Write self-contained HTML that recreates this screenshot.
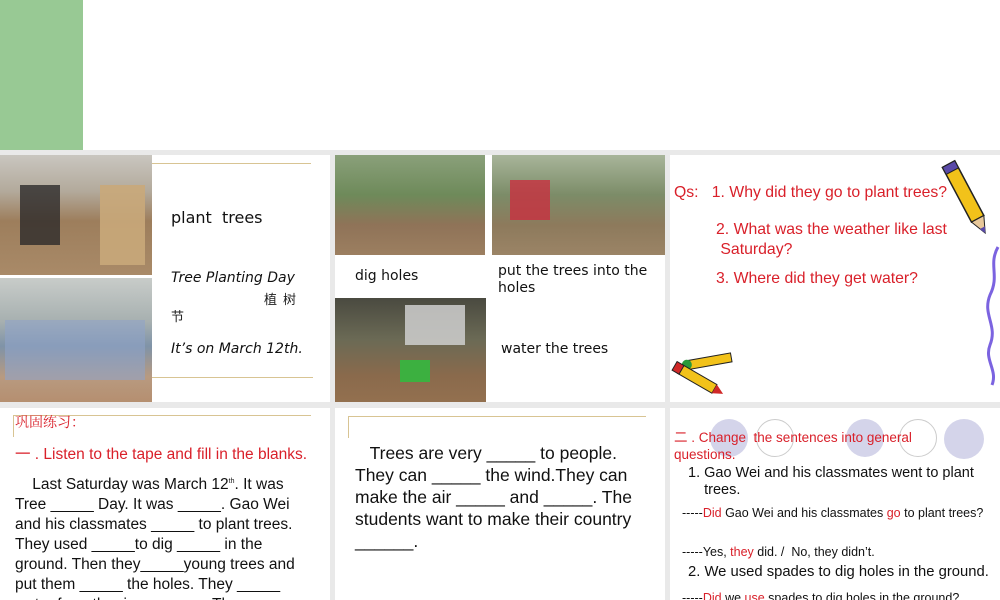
<!DOCTYPE html>
<html><head><meta charset="utf-8">
<style>
*{margin:0;padding:0;box-sizing:border-box}
html,body{width:1000px;height:600px;overflow:hidden}
body{background:#e9e9e9;position:relative;font-family:"Liberation Sans","Noto Sans CJK SC",sans-serif}
.a{position:absolute}
.p{position:absolute;background:#fff}
.ph{position:absolute}
.dv{font-family:"DejaVu Sans","Noto Sans CJK SC",sans-serif}
.r{color:#d9202a}
.t{white-space:nowrap}
</style></head><body>
<div class="a" style="left:0;top:0;width:1000px;height:150px;background:#fff"></div>
<div class="a" style="left:0;top:0;width:83px;height:150px;background:#98c994"></div>

<!-- panel 1 -->
<div class="p" style="left:0;top:155px;width:330px;height:247px"></div>
<div class="ph" style="left:0;top:155px;width:152px;height:120px;background:linear-gradient(#c9c6c0 0%,#b3aa9c 30%,#9d7e5c 55%,#a98a68 100%)"></div>
<div class="ph" style="left:20px;top:185px;width:40px;height:60px;background:#2d2a2a;opacity:.8"></div>
<div class="ph" style="left:100px;top:185px;width:45px;height:80px;background:#c9a97a;opacity:.9"></div>
<div class="ph" style="left:0;top:278px;width:152px;height:124px;background:linear-gradient(#c8ccc9 0%,#a7b0b0 35%,#7f93a8 55%,#b89a80 80%,#b58f70 100%)"></div>
<div class="ph" style="left:5px;top:320px;width:140px;height:60px;background:#8fa4c8;opacity:.6"></div>
<div class="a" style="left:152px;top:163px;width:159px;height:1px;background:#d8c493"></div>
<div class="a" style="left:152px;top:377px;width:161px;height:1px;background:#d8c493"></div>
<div class="a dv t" style="left:171px;top:208px;font-size:16px;color:#111">plant&nbsp; trees</div>
<div class="a dv t" style="left:171px;top:270px;font-size:14px;font-style:italic;color:#111">Tree Planting Day</div>
<div class="a t" style="left:264px;top:289px;font-size:13px;color:#222;letter-spacing:6px">植树</div>
<div class="a t" style="left:171px;top:306px;font-size:13px;color:#222">节</div>
<div class="a dv t" style="left:171px;top:341px;font-size:14px;font-style:italic;color:#111">It’s on March 12th.</div>

<!-- panel 2 -->
<div class="p" style="left:335px;top:155px;width:330px;height:247px"></div>
<div class="ph" style="left:335px;top:155px;width:150px;height:100px;background:linear-gradient(#8aa07a 0%,#6e8a5a 40%,#8f7358 70%,#9c7f60 100%)"></div>
<div class="ph" style="left:492px;top:155px;width:173px;height:100px;background:linear-gradient(#a8b59a 0%,#7c8c68 40%,#8d7a5c 70%,#9b8466 100%)"></div>
<div class="ph" style="left:510px;top:180px;width:40px;height:40px;background:#c83040;opacity:.8"></div>
<div class="ph" style="left:335px;top:298px;width:151px;height:104px;background:linear-gradient(#4a4a40 0%,#6b6a55 40%,#8a6a4c 75%,#93704f 100%)"></div>
<div class="ph" style="left:405px;top:305px;width:60px;height:40px;background:#cfcfcf;opacity:.85"></div>
<div class="ph" style="left:400px;top:360px;width:30px;height:22px;background:#3cb040"></div>
<div class="a dv t" style="left:355px;top:268px;font-size:14px;color:#111">dig holes</div>
<div class="a dv t" style="left:498px;top:263px;font-size:14px;line-height:17px;color:#111">put the trees into the<br>holes</div>
<div class="a dv t" style="left:501px;top:341px;font-size:14px;color:#111">water the trees</div>

<!-- panel 3 -->
<div class="p" style="left:670px;top:155px;width:330px;height:247px"></div>
<div class="a t r" style="left:674px;top:184px;font-size:15.8px">Qs: &nbsp; 1. Why did they go to plant trees?</div>
<div class="a t r" style="left:716px;top:220px;font-size:15.8px;line-height:20px">2. What was the weather like last<br>&nbsp;Saturday?</div>
<div class="a t r" style="left:716px;top:270px;font-size:15.8px">3. Where did they get water?</div>
<svg class="a" style="left:940px;top:155px" width="60" height="250" viewBox="0 0 60 250">
<g transform="rotate(-28 25 40)"><rect x="18" y="5" width="14" height="62" fill="#f2c21a" stroke="#222" stroke-width="1.5"/><rect x="18" y="5" width="14" height="8" fill="#5a4aa8" stroke="#222"/><polygon points="18,67 32,67 25,83" fill="#e8c89a" stroke="#222"/><polygon points="22,77 28,77 25,83" fill="#5a4aa8"/></g>
<path d="M58 92 C48 110 60 120 50 140 C42 160 58 170 50 190 C44 205 58 215 52 230" fill="none" stroke="#7b63e0" stroke-width="3"/>
</svg>
<svg class="a" style="left:668px;top:350px" width="70" height="50" viewBox="0 0 70 50">
<g transform="rotate(-10 35 20)"><rect x="20" y="8" width="45" height="9" fill="#f2c21a" stroke="#222"/><circle cx="20" cy="12" r="5" fill="#2a9a3a"/></g>
<g transform="rotate(30 25 30)"><rect x="8" y="22" width="40" height="10" fill="#f2c21a" stroke="#222"/><rect x="2" y="22" width="8" height="10" fill="#d02828" stroke="#222"/><polygon points="48,22 48,32 58,27" fill="#d02828"/></g>
</svg>

<!-- row 2 panels -->
<div class="p" style="left:0;top:408px;width:330px;height:192px"></div>
<div class="a" style="left:13px;top:415px;width:298px;height:1px;background:#d8c493"></div>
<div class="a" style="left:13px;top:415px;width:1px;height:22px;background:#d8c493"></div>
<div class="a t r" style="left:15px;top:412px;font-size:14px;font-family:'Noto Serif CJK SC',serif">巩固练习：</div>
<div class="a t r" style="left:15px;top:442px;font-size:15.5px">一 . Listen to the tape and fill in the blanks.</div>
<div class="a t" style="left:15px;top:472px;font-size:15.5px;line-height:20px;color:#111">&nbsp; &nbsp; Last Saturday was March 12<sup style="font-size:7px">th</sup>. It was<br>Tree _____ Day. It was _____. Gao Wei<br>and his classmates _____ to plant trees.<br>They used _____to dig _____ in the<br>ground. Then they_____young trees and<br>put them _____ the holes. They _____<br>water from the river. _____ . They</div>

<div class="p" style="left:335px;top:408px;width:330px;height:192px"></div>
<div class="a" style="left:348px;top:416px;width:298px;height:1px;background:#d8c493"></div>
<div class="a" style="left:348px;top:416px;width:1px;height:22px;background:#d8c493"></div>
<div class="a t" style="left:355px;top:442px;font-size:17.5px;line-height:22px;color:#111">&nbsp; &nbsp;Trees are very _____ to people.<br>They can _____ the wind.They can<br>make the air _____ and _____. The<br>students want to make their country<br>______.</div>

<div class="p" style="left:670px;top:408px;width:330px;height:192px"></div>
<div class="a" style="left:710px;top:419px;width:38px;height:38px;border-radius:50%;background:#d4d4ea"></div>
<div class="a" style="left:756px;top:419px;width:38px;height:38px;border-radius:50%;border:1px solid #ccc"></div>
<div class="a" style="left:846px;top:419px;width:38px;height:38px;border-radius:50%;background:#d4d4ea"></div>
<div class="a" style="left:899px;top:419px;width:38px;height:38px;border-radius:50%;border:1px solid #ccc"></div>
<div class="a" style="left:944px;top:419px;width:40px;height:40px;border-radius:50%;background:#d4d4ea"></div>
<div class="a t r" style="left:674px;top:429px;font-size:13.5px;line-height:17px">二 . Change&nbsp; the sentences into general<br>questions.</div>
<div class="a t" style="left:688px;top:465px;font-size:14.5px;line-height:17px;color:#111">1. Gao Wei and his classmates went to plant<br>&nbsp;&nbsp;&nbsp; trees.</div>
<div class="a t" style="left:682px;top:506px;font-size:12.5px;color:#111">-----<span class="r">Did</span> Gao Wei and his classmates <span class="r">go</span> to plant trees?</div>
<div class="a t" style="left:682px;top:545px;font-size:12.5px;color:#111">-----Yes, <span class="r">they</span> did. /&nbsp; No, they didn’t.</div>
<div class="a t" style="left:688px;top:564px;font-size:14.8px;color:#111">2. We used spades to dig holes in the ground.</div>
<div class="a t" style="left:682px;top:591px;font-size:12.5px;color:#111">-----<span class="r">Did</span> we <span class="r">use</span> spades to dig holes in the ground?</div>
</body></html>
